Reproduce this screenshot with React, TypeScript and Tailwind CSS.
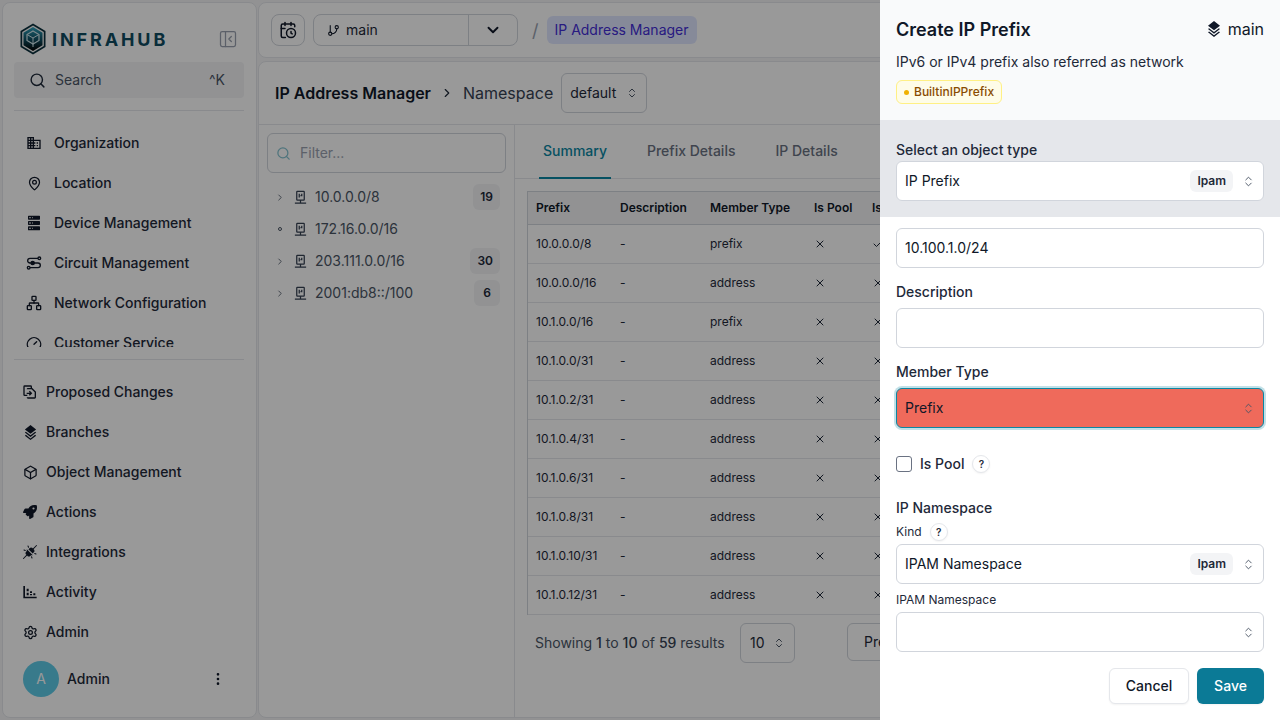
import {
  Box,
  CalendarClock,
  Check,
  ChevronDown,
  ChevronRight,
  ChevronsUpDown,
  EllipsisVertical,
  Gauge,
  GitBranch,
  MapPin,
  Network,
  PanelLeftClose,
  Search,
  Settings,
  X,
} from "lucide-react";
import type { ReactNode } from "react";
import { FaRocket } from "react-icons/fa";
import { PiPlugsConnectedFill } from "react-icons/pi";

const IconDomain = ({ className }: { className?: string }) => (
  <svg viewBox="0 0 24 24" fill="currentColor" className={className}>
    <path d="M18,15H16V17H18M18,11H16V13H18M20,19H12V17H14V15H12V13H14V11H12V9H20M10,7H8V5H10M10,11H8V9H10M10,15H8V13H10M10,19H8V17H10M6,7H4V5H6M6,11H4V9H6M6,15H4V13H6M6,19H4V17H6M12,7V3H2V21H22V7H12Z" />
  </svg>
);

const IconServer = ({ className }: { className?: string }) => (
  <svg viewBox="0 0 24 24" fill="currentColor" className={className}>
    <path d="M4,1H20A1,1 0 0,1 21,2V6A1,1 0 0,1 20,7H4A1,1 0 0,1 3,6V2A1,1 0 0,1 4,1M4,9H20A1,1 0 0,1 21,10V14A1,1 0 0,1 20,15H4A1,1 0 0,1 3,14V10A1,1 0 0,1 4,9M4,17H20A1,1 0 0,1 21,18V22A1,1 0 0,1 20,23H4A1,1 0 0,1 3,22V18A1,1 0 0,1 4,17M9,5H10V3H9V5M9,13H10V11H9V13M9,21H10V19H9V21M5,3V5H7V3H5M5,11V13H7V11H5M5,19V21H7V19H5Z" />
  </svg>
);

const IconCircuit = ({ className }: { className?: string }) => (
  <svg viewBox="0 0 24 24" fill="none" stroke="currentColor" strokeWidth="2" className={className}>
    <path d="M18 5H6a3.5 3.5 0 0 0 0 7h12a3.5 3.5 0 0 1 0 7H6" />
    <circle cx="20" cy="5" r="2" />
    <circle cx="4" cy="19" r="2" />
    <circle cx="10" cy="12" r="2.5" fill="currentColor" />
  </svg>
);

const IconReplace = ({ className }: { className?: string }) => (
  <svg viewBox="0 0 24 24" fill="none" stroke="currentColor" strokeWidth="2" className={className}>
    <path d="M8 17H4a1 1 0 0 1-1-1V4a1 1 0 0 1 1-1h9a1 1 0 0 1 1 1v3" />
    <path d="M8 8a1 1 0 0 1 1-1h6l5 5v8a1 1 0 0 1-1 1H9a1 1 0 0 1-1-1" />
    <path d="M7 14h7m-3-3 3 3-3 3" />
  </svg>
);

const IconLayers = ({ className }: { className?: string }) => (
  <svg viewBox="0 0 24 24" fill="currentColor" className={className}>
    <path d="M12 0L3 7L12 14L21 7Z M12 16.54L4.62 10.81L3 12.07L12 19.07L21 12.07L19.37 10.8Z M12 21.47L4.62 15.74L3 17L12 24L21 17L19.37 15.73Z" />
  </svg>
);

const IconActivity = ({ className }: { className?: string }) => (
  <svg viewBox="0 0 24 24" fill="currentColor" className={className}>
    <path d="M2 3h2.500v16H22v2.500H2z" />
    <path d="M7 7h3v4H7zM7 13h3v4H7zM12 11h3v2.500h-3zM12 15h3v2h-3zM17 14h3v3h-3z" />
  </svg>
);

const IconPrefix = ({ className }: { className?: string }) => (
  <svg viewBox="0 0 24 24" fill="none" stroke="currentColor" strokeWidth="2" className={className}>
    <rect x="6" y="2" width="12" height="14" rx="1" />
    <path d="M10 6v6M14 6v3h-2" />
    <path d="M12 16v5M3 21h18" />
  </svg>
);

const Logo = () => (
  <svg viewBox="0 0 26 32" className="w-[26px] h-[32px]">
    <defs>
      <linearGradient id="logoFill" x1="0" y1="0" x2="0" y2="1">
        <stop offset="0" stopColor="#2fa3bd" />
        <stop offset="0.55" stopColor="#0e4a5c" />
        <stop offset="1" stopColor="#000000" />
      </linearGradient>
    </defs>
    <path d="M13 0.500L25.500 8v16L13 31.500 0.500 24V8z" fill="#0a2f3c" />
    <path d="M13 2.500L23.800 9v14L13 29.500 2.200 23V9z" fill="#f4f4f4" />
    <path d="M13 4L22.500 9.800v12.400L13 28 3.500 22.200V9.800z" fill="url(#logoFill)" />
    <path d="M13 8l6 3.500v6L13 21l-6-3.500v-6z" fill="none" stroke="#cfe6ec" strokeWidth="1.200" />
    <path d="M7 11.500l6 3.500 6-3.500M13 15v9" fill="none" stroke="#cfe6ec" strokeWidth="1" />
  </svg>
);

const topNav = [
  { label: "Organization", icon: <IconDomain className="w-[16px] h-[16px]" /> },
  { label: "Location", icon: <MapPin className="w-[15px] h-[15px]" strokeWidth={2} /> },
  { label: "Device Management", icon: <IconServer className="w-[16px] h-[16px]" /> },
  { label: "Circuit Management", icon: <IconCircuit className="w-[16px] h-[16px]" /> },
  { label: "Network Configuration", icon: <Network className="w-[16px] h-[16px]" strokeWidth={2} /> },
  { label: "Customer Service", icon: <Gauge className="w-[16px] h-[16px]" strokeWidth={2} /> },
];

const bottomNav = [
  { label: "Proposed Changes", icon: <IconReplace className="w-[16px] h-[16px]" /> },
  { label: "Branches", icon: <IconLayers className="w-[15px] h-[15px]" /> },
  { label: "Object Management", icon: <Box className="w-[15px] h-[15px]" strokeWidth={2} /> },
  { label: "Actions", icon: <FaRocket className="w-[14px] h-[14px]" /> },
  { label: "Integrations", icon: <PiPlugsConnectedFill className="w-[16px] h-[16px]" /> },
  { label: "Activity", icon: <IconActivity className="w-[16px] h-[16px]" /> },
  { label: "Admin", icon: <Settings className="w-[15px] h-[15px]" strokeWidth={2} /> },
];

const tree = [
  { prefix: "10.0.0.0/8", count: "19", leaf: false },
  { prefix: "172.16.0.0/16", count: "", leaf: true },
  { prefix: "203.111.0.0/16", count: "30", leaf: false },
  { prefix: "2001:db8::/100", count: "6", leaf: false },
];

const rows = [
  ["10.0.0.0/8", "prefix", true],
  ["10.0.0.0/16", "address", false],
  ["10.1.0.0/16", "prefix", false],
  ["10.1.0.0/31", "address", false],
  ["10.1.0.2/31", "address", false],
  ["10.1.0.4/31", "address", false],
  ["10.1.0.6/31", "address", false],
  ["10.1.0.8/31", "address", false],
  ["10.1.0.10/31", "address", false],
  ["10.1.0.12/31", "address", false],
] as const;

const NavItem = ({ label, icon }: { label: string; icon: ReactNode }) => (
  <div className="flex items-center h-[40px] text-sm font-medium text-gray-800">
    <span className="w-[16px] flex justify-center shrink-0 text-gray-900">{icon}</span>
    <span>{label}</span>
  </div>
);

const Sidebar = () => (
  <aside className="w-[255px] shrink-0 h-full rounded-lg border border-gray-200 bg-white flex flex-col">
    <div className="flex items-center justify-between pl-[17px] pr-[18px] pt-[13px] h-[59px] shrink-0">
      <div className="flex items-center gap-[6px]">
        <Logo />
        <span className="text-[18px] font-bold tracking-[0.16em] text-[#0f4c61]">INFRAHUB</span>
      </div>
      <PanelLeftClose className="w-[20px] h-[20px] text-gray-400" strokeWidth={1.500} />
    </div>
    <div className="ml-[11px] mr-[12px] h-[36px] shrink-0 rounded bg-gray-100 flex items-center pl-[15px] pr-[19px] text-sm text-gray-600">
      <Search className="w-[17px] h-[17px] text-gray-800 mr-[9px]" />
      <span className="flex-1">Search</span>
      <span className="text-sm">^K</span>
    </div>
    <div className="ml-[11px] mr-[12px] mt-[12px] border-t border-gray-200 shrink-0" />
    <div className="h-[236px] shrink-0 overflow-hidden pl-[23px] pt-[12px] [&>div>span:first-child]:mr-[12px]">
      {topNav.map((item) => (
        <NavItem key={item.label} {...item} />
      ))}
    </div>
    <div className="ml-[11px] mr-[12px] mt-[12px] border-t border-gray-200 shrink-0" />
    <div className="pl-[19px] pt-[12px] [&>div>span:first-child]:mr-[8px]">
      {bottomNav.map((item) => (
        <NavItem key={item.label} {...item} />
      ))}
    </div>
    <div className="flex items-center pl-[20px] pr-[30px] mt-[9px]">
      <span className="w-[36px] h-[36px] rounded-full bg-[#5ecbe8] text-white flex items-center justify-center text-sm">
        A
      </span>
      <span className="ml-[8px] flex-1 text-sm font-medium text-gray-800">Admin</span>
      <EllipsisVertical className="w-[16px] h-[16px] text-gray-900" />
    </div>
  </aside>
);

const TopBar = () => (
  <div className="h-[56px] shrink-0 rounded-lg border border-gray-200 bg-white flex items-center pl-[12px]">
    <div className="w-[34px] h-[32px] rounded-lg border border-gray-300 flex items-center justify-center">
      <CalendarClock className="w-[18px] h-[18px] text-gray-900" />
    </div>
    <div className="ml-[8px] w-[205px] h-[32px] rounded-lg border border-gray-300 flex items-center text-sm text-gray-800">
      <div className="flex-1 flex items-center pl-[13px] gap-[6px] h-full border-r border-gray-300">
        <GitBranch className="w-[13px] h-[13px] text-gray-900" />
        <span>main</span>
      </div>
      <div className="w-[48px] flex justify-center">
        <ChevronDown className="w-[18px] h-[18px] text-gray-900" strokeWidth={2.500} />
      </div>
    </div>
    <span className="ml-[14px] text-[18px] text-gray-400">/</span>
    <span className="ml-[8px] h-[28px] px-[8px] rounded-md bg-indigo-100 text-indigo-700 text-sm flex items-center">
      IP Address Manager
    </span>
  </div>
);

const TreePanel = () => (
  <div className="w-[256px] shrink-0 border-r border-gray-200 px-[8px] pt-[8px]">
    <div className="h-[40px] rounded-md border border-gray-300 flex items-center pl-[8px] text-sm text-gray-400">
      <Search className="w-[15px] h-[15px] text-[#0b87a3] opacity-50 mr-[9px]" />
      Filter...
    </div>
    <div className="mt-[8px]">
      {tree.map((node) => (
        <div key={node.prefix} className="h-[32px] flex items-center text-sm text-gray-600 pr-[6px]">
          <span className="w-[10px] ml-[8px] flex justify-center">
            {node.leaf ? (
              <span className="w-[4px] h-[4px] rounded-full border border-gray-600" />
            ) : (
              <ChevronRight className="w-[11px] h-[11px]" strokeWidth={2} />
            )}
          </span>
          <IconPrefix className="w-[15px] h-[15px] ml-[8px] text-gray-700" />
          <span className="ml-[7px] flex-1">{node.prefix}</span>
          {node.count && (
            <span className="min-w-[26px] px-[7px] h-[26px] rounded-md bg-gray-100 text-gray-800 text-[12px] font-semibold flex items-center justify-center">
              {node.count}
            </span>
          )}
        </div>
      ))}
    </div>
  </div>
);

const PrefixTable = () => (
  <table className="w-[600px] table-fixed border-separate border-spacing-0 border border-gray-300 border-r-0 border-b-0 text-[12px] text-gray-800">
    <thead>
      <tr className="h-[33px] bg-gray-100 text-left font-semibold text-gray-900">
        <th className="w-[84px] px-[8px] font-semibold border-b border-gray-300">Prefix</th>
        <th className="w-[90px] px-[8px] font-semibold border-b border-gray-300">Description</th>
        <th className="w-[104px] px-[8px] font-semibold border-b border-gray-300">Member Type</th>
        <th className="w-[58px] px-[8px] font-semibold border-b border-gray-300">Is Pool</th>
        <th className="px-[8px] font-semibold border-b border-gray-300 whitespace-nowrap">Is Top Level</th>
      </tr>
    </thead>
    <tbody>
      {rows.map(([prefix, type, top]) => (
        <tr key={prefix} className="h-[39px]">
          <td className="px-[8px] border-b border-gray-200">{prefix}</td>
          <td className="px-[8px] border-b border-gray-200">-</td>
          <td className="px-[8px] border-b border-gray-200">{type}</td>
          <td className="px-[8px] border-b border-gray-200">
            <X className="w-[12px] h-[12px]" />
          </td>
          <td className="px-[8px] border-b border-gray-200">
            {top ? <Check className="w-[12px] h-[12px]" /> : <X className="w-[12px] h-[12px]" />}
          </td>
        </tr>
      ))}
    </tbody>
  </table>
);

const Content = () => (
  <div className="flex-1 mt-[3px] rounded-lg border border-gray-200 bg-white flex flex-col overflow-hidden min-h-0">
    <div className="h-[63px] shrink-0 border-b border-gray-200 flex items-center pl-[16px]">
      <span className="text-base font-semibold text-gray-900">IP Address Manager</span>
      <ChevronRight className="w-[14px] h-[14px] mx-[9px] text-gray-800" />
      <span className="text-base text-gray-700">Namespace</span>
      <div className="ml-[8px] w-[86px] h-[40px] rounded-md border border-gray-300 flex items-center justify-between pl-[8px] pr-[8px] text-sm text-gray-800">
        default
        <ChevronsUpDown className="w-[12px] h-[12px] text-gray-600" />
      </div>
    </div>
    <div className="flex-1 flex min-h-0">
      <TreePanel />
      <div className="flex-1 min-w-0">
        <div className="h-[54px] border-b border-gray-200 flex items-stretch pl-[24px] text-sm font-medium text-gray-500">
          <span className="px-[4px] flex items-center pb-[1px] border-b-2 border-[#0b87a3] text-[#0b87a3] -mb-px">
            Summary
          </span>
          <span className="ml-[36px] flex items-center pb-[1px]">Prefix Details</span>
          <span className="ml-[40px] flex items-center pb-[1px]">IP Details</span>
        </div>
        <div className="pl-[12px] pt-[12px]">
          <PrefixTable />
          <div className="mt-[8px] flex items-center pl-[8px] text-sm text-gray-600">
            <span className="w-[205px]">
              Showing <span className="font-medium text-gray-700">1</span> to{" "}
              <span className="font-medium text-gray-700">10</span> of{" "}
              <span className="font-medium text-gray-700">59</span> results
            </span>
            <div className="w-[55px] h-[40px] rounded-md border border-gray-300 flex items-center justify-between px-[9px] text-gray-800">
              10
              <ChevronsUpDown className="w-[12px] h-[12px] text-gray-600" />
            </div>
            <div className="ml-[52px] h-[38px] -mt-[2px] px-[16px] rounded-md border border-gray-300 flex items-center text-gray-800">
              Previous
            </div>
          </div>
        </div>
      </div>
    </div>
  </div>
);

const Ipam = () => (
  <span className="h-[22px] px-[7px] rounded-md bg-gray-100 text-[12px] font-semibold text-gray-800 flex items-center">
    Ipam
  </span>
);

const Help = () => (
  <span className="w-[18px] h-[18px] rounded-full border border-gray-200 bg-white shadow-xs flex items-center justify-center text-[10px] font-semibold text-gray-800">
    ?
  </span>
);

const Field = ({ children, className }: { children?: ReactNode; className?: string }) => (
  <div
    className={`h-[40px] rounded-md border flex items-center pl-[8px] pr-[8px] text-sm text-gray-900 ${className ?? "bg-white border-gray-300"}`}
  >
    {children}
  </div>
);

const Chevrons = () => <ChevronsUpDown className="w-[13px] h-[13px] ml-[9px] text-gray-600" strokeWidth={1.750} />;

const CreatePanel = () => (
  <div className="absolute right-0 top-0 w-[400px] h-[720px] bg-white flex flex-col">
    <div className="h-[120px] shrink-0 bg-gray-50 px-[16px] pt-[19px]">
      <div className="flex items-center justify-between h-[22px]">
        <span className="text-lg font-semibold text-gray-900">Create IP Prefix</span>
        <span className="flex items-center gap-[6px] text-base text-gray-900 -mt-[2px]">
          <IconLayers className="w-[16px] h-[16px]" />
          main
        </span>
      </div>
      <p className="mt-[11px] text-sm text-gray-800 leading-[20px]">IPv6 or IPv4 prefix also referred as network</p>
      <span className="mt-[8px] inline-flex items-center h-[24px] px-[7px] gap-[5px] rounded-md border border-yellow-200 bg-yellow-50 text-[12px] font-medium text-yellow-800">
        <span className="w-[5px] h-[5px] rounded-full bg-yellow-500" />
        BuiltinIPPrefix
      </span>
    </div>
    <div className="h-[97px] shrink-0 bg-gray-200 px-[16px] pt-[20px]">
      <div className="text-sm font-medium text-gray-800 leading-[20px]">Select an object type</div>
      <Field className="mt-px bg-white border-gray-300 justify-between">
        <span className="flex-1 pb-[1px]">IP Prefix</span>
        <Ipam />
        <Chevrons />
      </Field>
    </div>
    <div className="flex-1 px-[16px] pt-[11px]">
      <Field>10.100.1.0/24</Field>
      <div className="mt-[14px] text-sm font-medium text-gray-800 leading-[20px]">Description</div>
      <Field className="mt-[6px] bg-white border-gray-300" />
      <div className="mt-[14px] text-sm font-medium text-gray-800 leading-[20px]">Member Type</div>
      <Field className="mt-[6px] bg-[#ef6a5b] border-[#0b87a3] ring-2 ring-[#0b87a3]/25 justify-between">
        <span className="flex-1">Prefix</span>
        <Chevrons />
      </Field>
      <div className="mt-[28px] flex items-center h-[16px] text-sm font-medium text-gray-800">
        <span className="w-[16px] h-[16px] rounded-[3px] border border-gray-500 bg-white" />
        <span className="ml-[8px] mr-[8px]">Is Pool</span>
        <Help />
      </div>
      <div className="mt-[26px] text-sm font-medium text-gray-800 leading-[20px]">IP Namespace</div>
      <div className="mt-[5px] flex items-center h-[18px] text-[12px] text-gray-800 gap-[8px]">
        Kind
        <Help />
      </div>
      <Field className="mt-[3px] bg-white border-gray-300 justify-between">
        <span className="flex-1 pb-[1px]">IPAM Namespace</span>
        <Ipam />
        <Chevrons />
      </Field>
      <div className="mt-[8px] text-[12px] text-gray-800 leading-[16px]">IPAM Namespace</div>
      <Field className="mt-[4px] bg-white border-gray-300 justify-end">
        <Chevrons />
      </Field>
      <div className="mt-[16px] flex justify-end gap-[8px] text-sm font-medium">
        <span className="w-[80px] h-[36px] rounded-md border border-gray-200 bg-white shadow-xs flex items-center justify-center text-gray-900">
          Cancel
        </span>
        <span className="w-[67px] h-[36px] rounded-md bg-[#0b7a96] shadow-xs flex items-center justify-center text-white">
          Save
        </span>
      </div>
    </div>
  </div>
);

export default function App() {
  return (
    <div className="relative w-[1280px] h-[720px] overflow-hidden bg-gray-100 [font-family:Inter,sans-serif]">
      <div className="flex h-full gap-[1px] p-[2px]">
        <Sidebar />
        <main className="flex-1 min-w-0 flex flex-col">
          <TopBar />
          <Content />
        </main>
      </div>
      <div className="absolute inset-0 bg-black/40" />
      <CreatePanel />
    </div>
  );
}
